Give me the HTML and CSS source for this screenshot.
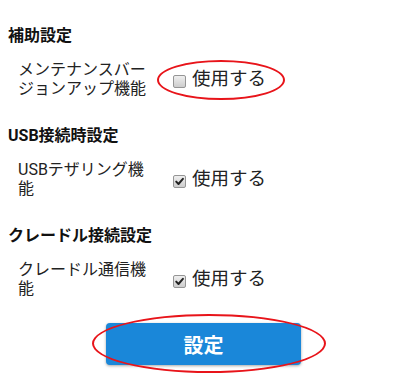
FILE: index.html
```html
<!DOCTYPE html>
<html lang="ja">
<head>
<meta charset="utf-8">
<link rel="stylesheet" href="styles.css">
</head>
<body>
<div class="page">
  <section class="section">
    <h2 class="heading">補助設定</h2>
    <div class="row">
      <div class="label">メンテナンスバージョンアップ機能</div>
      <label class="control">
        <span class="cb"></span>
        <span class="ctext">使用する</span>
        <span class="mark mark-row"></span>
      </label>
    </div>
  </section>
  <section class="section">
    <h2 class="heading">USB接続時設定</h2>
    <div class="row">
      <div class="label">USBテザリング機能</div>
      <label class="control">
        <span class="cb checked"><svg viewBox="0 0 13 13" width="13" height="13"><path d="M3.2 6.6 L5.5 9 L9.9 3.8" fill="none" stroke="#222" stroke-width="2" stroke-linecap="round" stroke-linejoin="round"/></svg></span>
        <span class="ctext">使用する</span>
      </label>
    </div>
  </section>
  <section class="section">
    <h2 class="heading">クレードル接続設定</h2>
    <div class="row">
      <div class="label">クレードル通信機能</div>
      <label class="control">
        <span class="cb checked"><svg viewBox="0 0 13 13" width="13" height="13"><path d="M3.2 6.6 L5.5 9 L9.9 3.8" fill="none" stroke="#222" stroke-width="2" stroke-linecap="round" stroke-linejoin="round"/></svg></span>
        <span class="ctext">使用する</span>
      </label>
    </div>
  </section>
  <div class="actions">
    <button class="btn">設定<span class="mark mark-btn"></span></button>
  </div>
</div>
</body>
</html>
```

FILE: styles.css
```css
* { box-sizing: border-box; }
html, body { margin: 0; padding: 0; background: #fff; }
body {
  font-family: Roboto, "Noto Sans CJK JP", sans-serif;
  color: #222;
  width: 400px;
  height: 387px;
  overflow: hidden;
}
.page {
  padding: 26px 0 0 8px;
}
.section { margin-bottom: 28px; }
.heading {
  margin: 0 0 14px 0;
  font-size: 16px;
  line-height: 20px;
  font-weight: bold;
  color: #111;
}
.row {
  display: flex;
  align-items: center;
  padding-left: 10px;
}
.label {
  width: 135px;
  margin-right: 20px;
  font-size: 16px;
  line-height: 19px;
  color: #222;
}
.control {
  position: relative;
  display: flex;
  align-items: center;
  gap: 6px;
}
.cb {
  width: 13px;
  height: 13px;
  margin-top: 5px;
  border: 1px solid #959595;
  border-radius: 2px;
  background: linear-gradient(#efefef, #cdcdcd);
  display: flex;
  align-items: center;
  justify-content: center;
  overflow: hidden;
}
.cb svg { display: block; flex: none; }
.ctext {
  font-size: 18.5px;
  line-height: 22px;
  color: #222;
}
.actions {
  display: flex;
  justify-content: center;
  margin-top: -3px;
  padding-right: 1px;
}
.btn {
  position: relative;
  width: 195px;
  height: 42px;
  border: none;
  border-radius: 4px;
  background: #1a87d9;
  color: #fff;
  font-family: Roboto, "Noto Sans CJK JP", sans-serif;
  font-size: 20px;
  font-weight: bold;
  box-shadow: 0 1px 3px rgba(0,0,0,0.35);
  padding: 0;
}
.mark {
  position: absolute;
  border: 2px solid #e8141a;
  border-radius: 50%;
  pointer-events: none;
}
.mark-row {
  left: -16px;
  top: -8px;
  width: 128px;
  height: 40px;
}
.mark-btn {
  left: -14px;
  top: -9px;
  width: 234px;
  height: 59px;
}
```
